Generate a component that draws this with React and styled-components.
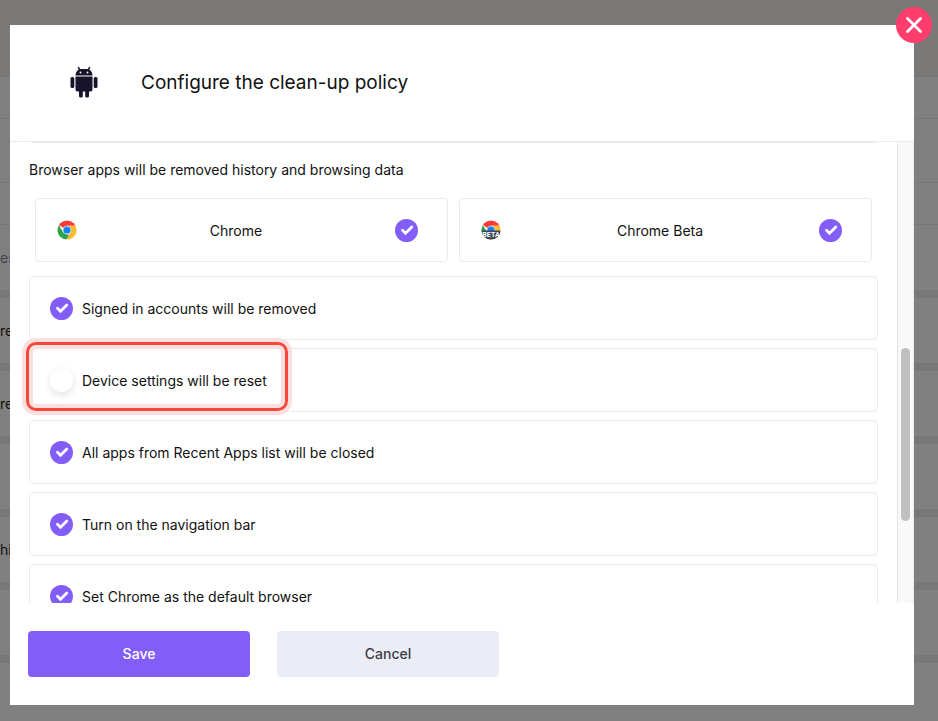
import { useState } from "react";
import styled, { createGlobalStyle } from "styled-components";

const GlobalStyle = createGlobalStyle`
  * {
    box-sizing: border-box;
  }
  body {
    margin: 0;
    background: #808080;
    color: #111;
    font-family: Inter, "Open Sans", sans-serif;
    font-size: 14px;
  }
`;

const Page = styled.div`
  height: 100vh;
  overflow: hidden;
`;

const PageTop = styled.div`
  height: 77px;
  background: #7b7977;
  border-bottom: 1px solid #757575;
`;

const PageBand = styled.div`
  height: ${({ $height }) => $height}px;
  border-bottom: 1px solid #767676;
`;

const PageRow = styled.div`
  display: flex;
  align-items: center;
  height: 73px;
  color: ${({ $muted }) => ($muted ? "#44444f" : "#111")};
  border-bottom: 8px solid #7a7876;
`;

const Overlay = styled.div`
  position: fixed;
  inset: 0;
  padding: 25px 24px 16px 10px;
`;

const Modal = styled.section`
  position: relative;
  display: flex;
  flex-direction: column;
  height: 100%;
  background: #fff;
`;

const CloseButton = styled.button`
  position: absolute;
  top: -18px;
  right: -18px;
  display: grid;
  place-items: center;
  width: 36px;
  height: 36px;
  padding: 0;
  border: none;
  border-radius: 50%;
  background: #ff3d6c;
`;

const Header = styled.header`
  display: flex;
  align-items: center;
  gap: 43px;
  flex: none;
  height: 117px;
  padding: 0 60px 2px;
  border-bottom: 1px solid #ebebeb;
`;

const Title = styled.h1`
  margin: 0;
  font-size: 19px;
  font-weight: 400;
`;

const Body = styled.div`
  display: flex;
  flex: 1;
  min-height: 0;
`;

const Options = styled.div`
  flex: 1;
  padding: 0 19px;
  overflow-y: auto;
  scrollbar-width: none;
`;

const Divider = styled.hr`
  height: 1px;
  margin: 0 2px;
  border: none;
  background: #ebebeb;
`;

const Caption = styled.h2`
  margin: 16px 0 18px;
  font-size: 14px;
  line-height: 21px;
  font-weight: 400;
`;

const Browsers = styled.div`
  display: grid;
  grid-template-columns: 1fr 1fr;
  gap: 11px;
  padding: 0 6px;
  margin-bottom: 14px;
`;

const Card = styled.label`
  display: flex;
  align-items: center;
  height: 64px;
  padding: 0 29px 0 21px;
  border: 1px solid #ebebeb;
  border-radius: 4px;
`;

const CardName = styled.span`
  flex: 1;
  text-align: center;
`;

const Option = styled.label`
  position: relative;
  display: flex;
  align-items: center;
  gap: 9px;
  height: 64px;
  margin-bottom: 8px;
  padding: 0 20px;
  border: 1px solid #ebebeb;
  border-radius: 4px;
`;

const Highlight = styled.span`
  position: absolute;
  inset: -7px auto 0 -4px;
  width: 262px;
  border: 3px solid #f5473c;
  border-radius: 10px;
  box-shadow: 0 0 0 4px #fbdfdf, inset 0 0 0 4px #fbdfdf;
  pointer-events: none;
`;

const Tick = styled.span`
  display: grid;
  place-items: center;

  > * {
    grid-area: 1 / 1;
  }
  svg {
    pointer-events: none;
  }
`;

const TickInput = styled.input`
  appearance: none;
  width: 23px;
  height: 23px;
  margin: 0;
  border-radius: 50%;
  background: #fff;
  box-shadow: 0 3px 8px rgba(0, 0, 0, 0.12);

  &:checked {
    background: #835df7;
    box-shadow: none;
  }
`;

const Track = styled.div`
  flex: none;
  display: flex;
  justify-content: center;
  width: 17px;
  padding-top: 206px;
  border-left: 1px solid #e4e4e4;
  border-right: 1px solid #ececec;
  background: #f9f9f9;
`;

const Thumb = styled.div`
  width: 9px;
  height: 173px;
  border-radius: 5px;
  background: #c0c0c0;
`;

const Footer = styled.footer`
  display: flex;
  gap: 27px;
  flex: none;
  height: 102px;
  padding: 28px 18px 0;
`;

const Button = styled.button`
  width: 222px;
  height: 46px;
  padding: 0 0 2px;
  border: none;
  border-radius: 4px;
  background: ${({ $primary }) => ($primary ? "#835df7" : "#eaecf6")};
  color: ${({ $primary }) => ($primary ? "#fff" : "#3d3d46")};
  font: 500 14px Inter, sans-serif;
`;

function AndroidIcon() {
  return (
    <svg width="28" height="32" viewBox="0 0 28 32" fill="#17132a">
      <path
        d="M8.500 1.500l1.500 3M19.500 1.500l-1.500 3"
        stroke="#17132a"
        strokeWidth="1.600"
        strokeLinecap="round"
      />
      <path d="M5.500 9.500C5.500 6 8 3 11 3h6c3 0 5.500 3 5.500 6.500z" />
      <circle cx="10.500" cy="6.500" r="0.900" fill="#fff" />
      <circle cx="17.500" cy="6.500" r="0.900" fill="#fff" />
      <path d="M5.500 10.500h17v13a2 2 0 0 1-2 2h-13a2 2 0 0 1-2-2z" />
      <rect x="0.500" y="11" width="3.800" height="11" rx="1.600" />
      <rect x="23.700" y="11" width="3.800" height="11" rx="1.600" />
      <rect x="9" y="23" width="3.800" height="8.500" rx="1.600" />
      <rect x="15.200" y="23" width="3.800" height="8.500" rx="1.600" />
    </svg>
  );
}

function ChromeIcon({ beta }) {
  return (
    <svg width="20" height="20" viewBox="0 0 48 48">
      <clipPath id="disc">
        <circle cx="24" cy="24" r="23" />
      </clipPath>
      <g clipPath="url(#disc)">
        <path d="M24 24L4 12V0h44v13.500H24z" fill="#fb3b36" />
        <path d="M24 13.500h24V48H22l11-19z" fill="#fdba2f" />
        <path d="M3.500 11.500L15 29.500l9 5h5.500L22 48H0V12z" fill="#2da44c" />
        <circle cx="24" cy="24" r="10.500" fill="#d9e6f7" />
        <circle cx="24" cy="24" r="8.500" fill="#1283f5" />
        {beta && <path d="M0 25h48v23H0z" fill="#3d4657" />}
      </g>
      {beta && (
        <text
          x="24"
          y="40"
          textAnchor="middle"
          fontFamily="Roboto, sans-serif"
          fontWeight="700"
          fontSize="17"
          fill="#fff"
        >
          BETA
        </text>
      )}
    </svg>
  );
}

function Checkbox({ initial = true }) {
  const [checked, setChecked] = useState(initial);
  return (
    <Tick>
      <TickInput
        type="checkbox"
        checked={checked}
        onChange={() => setChecked(!checked)}
      />
      {checked && (
        <svg width="14" height="12" viewBox="0 0 14 12">
          <path
            d="M2.500 6.200l3 3L11.800 3"
            fill="none"
            stroke="#fff"
            strokeWidth="2.800"
            strokeLinecap="round"
          />
        </svg>
      )}
    </Tick>
  );
}

const options = [
  { text: "Signed in accounts will be removed" },
  { text: "Device settings will be reset", off: true },
  { text: "All apps from Recent Apps list will be closed" },
  { text: "Turn on the navigation bar" },
  { text: "Set Chrome as the default browser" },
];

const pageRows = ["es", "re", "re", "", "hi", ""];

function App() {
  return (
    <>
      <GlobalStyle />
      <Page>
        <PageTop />
        <PageBand $height={42} />
        <PageBand $height={64} />
        <PageBand $height={42} />
        {pageRows.map((text, i) => (
          <PageRow key={i} $muted={i === 0}>
            {text}
          </PageRow>
        ))}
      </Page>
      <Overlay>
        <Modal role="dialog" aria-labelledby="policy-title">
          <CloseButton aria-label="Close">
            <svg width="16" height="16" viewBox="0 0 16 16">
              <path
                d="M1.500 1.500l13 13M14.500 1.500l-13 13"
                stroke="#fff"
                strokeWidth="2.800"
                strokeLinecap="round"
              />
            </svg>
          </CloseButton>
          <Header>
            <AndroidIcon />
            <Title id="policy-title">Configure the clean-up policy</Title>
          </Header>
          <Body>
            <Options>
              <Divider />
              <Caption>
                Browser apps will be removed history and browsing data
              </Caption>
              <Browsers>
                <Card>
                  <ChromeIcon />
                  <CardName>Chrome</CardName>
                  <Checkbox />
                </Card>
                <Card>
                  <ChromeIcon beta />
                  <CardName>Chrome Beta</CardName>
                  <Checkbox />
                </Card>
              </Browsers>
              {options.map(({ text, off }) => (
                <Option key={text}>
                  <Checkbox initial={!off} />
                  {text}
                  {off && <Highlight />}
                </Option>
              ))}
            </Options>
            <Track>
              <Thumb />
            </Track>
          </Body>
          <Footer>
            <Button $primary>Save</Button>
            <Button>Cancel</Button>
          </Footer>
        </Modal>
      </Overlay>
    </>
  );
}

export default App;
